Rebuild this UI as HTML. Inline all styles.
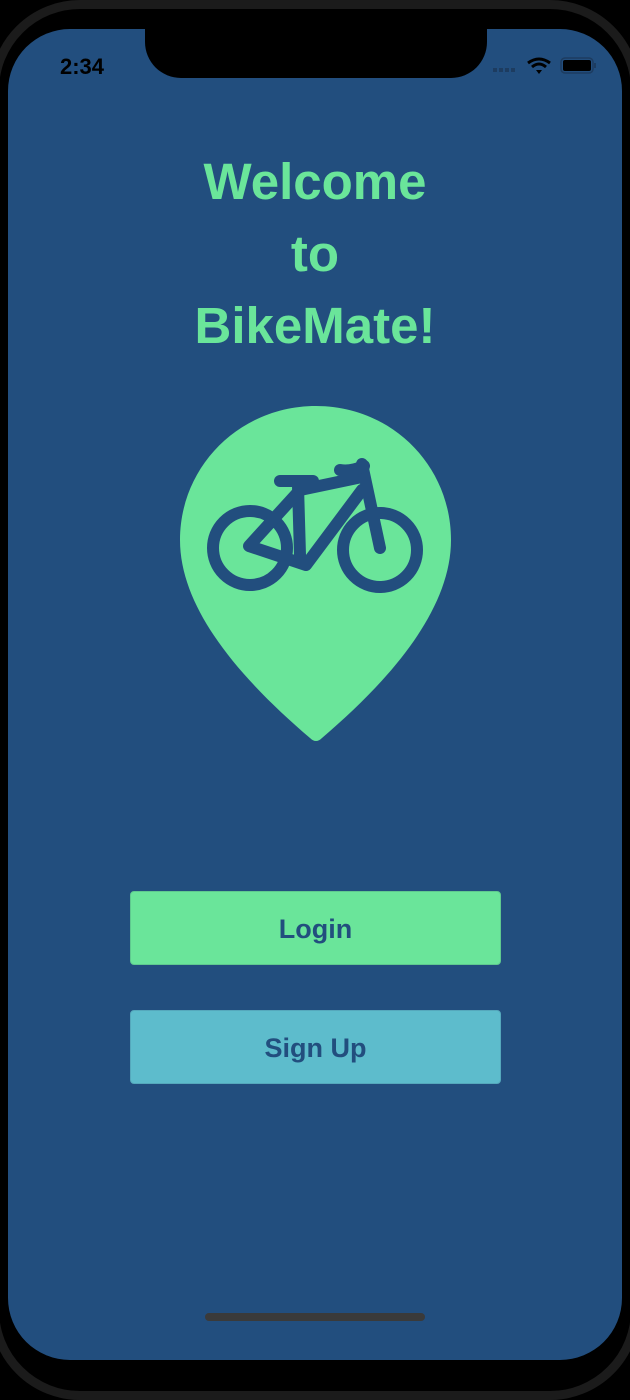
<!DOCTYPE html>
<html><head><style>
*{margin:0;padding:0;box-sizing:border-box}
html,body{width:630px;height:1370px}
body{background:#000;position:relative;overflow:hidden;font-family:"Liberation Sans",sans-serif}
.bezel{position:absolute;left:-10px;top:0;width:650px;height:1400px;border:9px solid #1b1b1b;border-radius:90px}
.screen{position:absolute;left:8px;top:29px;width:614px;height:1331px;background:#224e7e;border-radius:62px;overflow:hidden}
.notch{position:absolute;left:137px;top:-2px;width:342px;height:51px;background:#000;border-radius:0 0 36px 36px}
.time{position:absolute;left:52px;top:25px;font-size:22px;font-weight:bold;color:#000}
h1{position:absolute;left:0;top:117px;width:614px;text-align:center;color:#6ae59a;font-size:51px;line-height:72px;font-weight:bold}
.btn{position:absolute;left:122px;width:371px;height:74px;border-radius:4px;text-align:center;line-height:74px;font-size:27px;font-weight:bold;color:#224e7e}
.home{position:absolute;left:197px;top:1284px;width:220px;height:8px;border-radius:4px;background:#3a3a3a}
</style></head><body>
<div class="bezel"></div>
<div class="screen">
<div class="notch"></div>
<div class="time">2:34</div>
<svg style="position:absolute;left:484px;top:26px" width="110" height="22" viewBox="0 0 110 22">
<g fill="#1d3c60"><rect x="1" y="13" width="4" height="4"/><rect x="7" y="13" width="4" height="4"/><rect x="13" y="13" width="4" height="4"/><rect x="19" y="13" width="4" height="4"/></g>
<path d="M36 8 Q47 0 58 8" stroke="#000" stroke-width="3" fill="none"/><path d="M40 12 Q47 6 54 12" stroke="#000" stroke-width="3" fill="none"/><path d="M44 15 L47 19 L50 15 Z" fill="#000"/>
<rect x="69" y="3" width="32" height="15" rx="4" fill="none" stroke="#1d3c60" stroke-width="1.5"/><rect x="71" y="5" width="28" height="11" rx="2" fill="#000"/><rect x="102" y="8" width="2" height="5" fill="#1d3c60"/>
</svg>
<h1>Welcome<br>to<br>BikeMate!</h1>
<svg style="position:absolute;left:0;top:0" width="614" height="760" viewBox="8 29 614 760">
<path d="M316 406 C392 406 451 466 451 540 C451 610 390 680 322 738 Q316 744 310 738 C242 680 180 610 180 540 C180 466 240 406 316 406 Z" fill="#6ae59a"/>
<g stroke="#224e7e" stroke-width="12" fill="none" stroke-linecap="round" stroke-linejoin="round">
<circle cx="250" cy="548" r="37"/><circle cx="380" cy="550" r="37"/>
<path d="M298 486 L300 555"/>
<path d="M300 490 L362 477"/>
<path d="M300 490 L249 546 L306 565 L362 490"/>
<path d="M362 464 L380 548"/>
<path d="M280 481 L313 481"/>
<path d="M340 470 Q350 472 364 466"/>
</g>
</svg>
<div class="btn" style="top:862px;background:#6ae59a;border:1px solid #5fc98f">Login</div>
<div class="btn" style="top:981px;background:#5dbccc;border:1px solid #55a8bc">Sign Up</div>
<div class="home"></div>
</div>
</body></html>
